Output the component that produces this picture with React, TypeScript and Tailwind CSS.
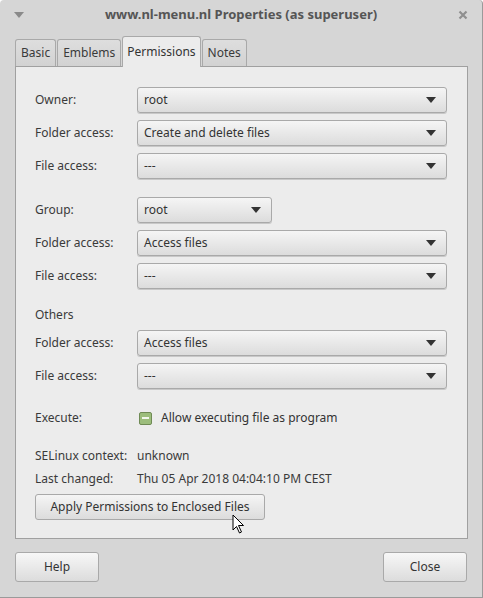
import React from "react";

const font = { fontFamily: '"Noto Sans", "Open Sans", sans-serif' };

function Arrow() {
  return (
    <svg width="10" height="6" viewBox="0 0 10 6" className="shrink-0">
      <path d="M0 0 L10 0 L5 6 Z" fill="#333" />
    </svg>
  );
}

function Combo({ value, className = "w-[310px]" }: { value: string; className?: string }) {
  return (
    <div
      className={`flex h-[26px] items-center justify-between rounded-[3px] border border-[#a9a9a9] bg-gradient-to-b from-[#f5f5f5] to-[#dcdcdc] pl-[6px] pr-[10px] text-[#333] shadow-[0_1px_0_#c8c8c8] ${className}`}
    >
      <span>{value}</span>
      <Arrow />
    </div>
  );
}

function Row({ label, value, short }: { label: string; value: string; short?: boolean }) {
  return (
    <div className="flex items-center">
      <span className="w-[102px] shrink-0 text-[#3a3a3a]">{label}</span>
      <Combo value={value} className={short ? "w-[135px]" : "w-[310px]"} />
    </div>
  );
}

function Tab({ label, active }: { label: string; active?: boolean }) {
  return active ? (
    <div className="relative z-10 -mb-px flex h-[31px] items-center rounded-t-[3px] border border-b-0 border-[#a9a9a9] bg-[#ececec] px-[4px] text-[#333]">
      {label}
    </div>
  ) : (
    <div className="flex h-[27px] items-center rounded-t-[3px] border border-b-0 border-[#a9a9a9] bg-gradient-to-b from-[#dedede] to-[#d2d2d2] px-[5px] text-[#3a3a3a]">
      {label}
    </div>
  );
}

function Cursor() {
  return (
    <svg width="14" height="20" viewBox="0 0 14 20" className="absolute left-[232px] top-[514px]">
      <path d="M1 1 L1 16 L4.5 12.5 L7.5 19 L9.5 18 L6.5 11.5 L11.5 11.5 Z" fill="#fff" stroke="#000" strokeWidth="1" strokeLinejoin="round" />
    </svg>
  );
}

export default function App() {
  return (
    <div
      className="relative h-[598px] w-[483px] overflow-hidden rounded-t-[4px] border-r border-b border-[#9a9a9a] bg-[#d6d6d6] text-[12px]"
      style={font}
    >
      <div className="flex h-[29px] items-center justify-between px-[14px] pt-[1px]">
        <svg width="10" height="6" viewBox="0 0 10 6">
          <path d="M0 0 L10 0 L5 6 Z" fill="#8a8a8a" />
        </svg>
        <span className="text-[13px] font-bold text-[#555]">www.nl-menu.nl Properties (as superuser)</span>
        <svg width="10" height="10" viewBox="0 0 10 10">
          <path d="M1.5 1.5 L8.5 8.5 M8.5 1.5 L1.5 8.5" stroke="#8f8f8f" strokeWidth="2.2" />
        </svg>
      </div>

      <div className="mx-[15px] mt-[7px]">
        <div className="flex items-end gap-px">
          <Tab label="Basic" />
          <Tab label="Emblems" />
          <Tab label="Permissions" active />
          <Tab label="Notes" />
        </div>
        <div className="flex h-[473px] w-[453px] flex-col border border-[#a0a0a0] bg-[#ececec] pl-[19px] pt-[20px]">
          <div className="flex flex-col gap-[7px]">
            <Row label="Owner:" value="root" />
            <Row label="Folder access:" value="Create and delete files" />
            <Row label="File access:" value="---" />
          </div>
          <div className="mt-[18px] flex flex-col gap-[7px]">
            <Row label="Group:" value="root" short />
            <Row label="Folder access:" value="Access files" />
            <Row label="File access:" value="---" />
          </div>
          <div className="mt-[17px] h-[18px] leading-[18px] text-[#3a3a3a]">Others</div>
          <div className="mt-[6px] flex flex-col gap-[7px]">
            <Row label="Folder access:" value="Access files" />
            <Row label="File access:" value="---" />
          </div>
          <div className="mt-[20px] flex h-[18px] items-center">
            <span className="w-[102px] shrink-0 text-[#3a3a3a]">Execute:</span>
            <span className="ml-[2px] flex h-[13px] w-[13px] items-center justify-center rounded-[2px] border border-[#6f8a55] bg-[#9cbd7c]">
              <span className="h-[2px] w-[7px] bg-[#f3f7ee]" />
            </span>
            <span className="ml-[9px] text-[#333]">Allow executing file as program</span>
          </div>
          <div className="mt-[20px] flex h-[18px] items-center">
            <span className="w-[102px] shrink-0 text-[#3a3a3a]">SELinux context:</span>
            <span className="text-[#3a3a3a]">unknown</span>
          </div>
          <div className="mt-[5px] flex h-[18px] items-center">
            <span className="w-[102px] shrink-0 text-[#3a3a3a]">Last changed:</span>
            <span className="text-[#3a3a3a]">Thu 05 Apr 2018 04:04:10 PM CEST</span>
          </div>
          <div className="mt-[6px] flex h-[26px] w-[230px] items-center justify-center rounded-[3px] border border-[#a9a9a9] bg-gradient-to-b from-[#f5f5f5] to-[#dcdcdc] text-[#333]">
            Apply Permissions to Enclosed Files
          </div>
        </div>
      </div>

      <div className="mx-[15px] mt-[13px] flex justify-between">
        <div className="flex h-[30px] w-[84px] items-center justify-center rounded-[3px] border border-[#a9a9a9] bg-gradient-to-b from-[#f7f7f7] to-[#dcdcdc] text-[#333]">
          Help
        </div>
        <div className="flex h-[30px] w-[84px] items-center justify-center rounded-[3px] border border-[#a9a9a9] bg-gradient-to-b from-[#f7f7f7] to-[#dcdcdc] text-[#333]">
          Close
        </div>
      </div>
      <Cursor />
    </div>
  );
}
